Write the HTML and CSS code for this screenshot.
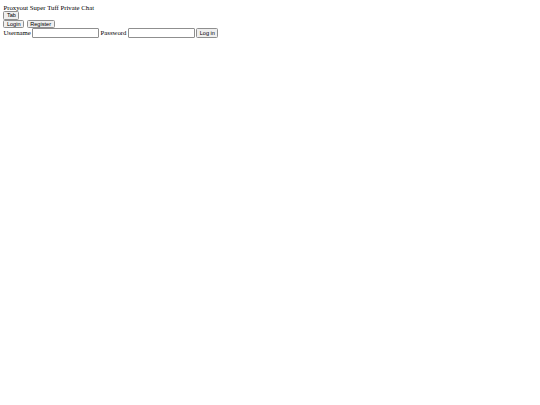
FILE: index.html
```html
<!DOCTYPE html>
<html>
<head>
<meta charset="utf-8">
<title>Proxyout Super Tuff Private Chat</title>
<link rel="stylesheet" href="styles.css">
</head>
<body>
<div class="title">Proxyout Super Tuff Private Chat</div>
<div class="row"><button class="btn">Tab</button></div>
<div class="row"><button class="btn">Login</button> <button class="btn">Register</button></div>
<form class="row login">
  <label>Username</label> <input class="field" type="text">
  <label>Password</label> <input class="field" type="password">
  <button class="btn" type="button">Log in</button>
</form>
</body>
</html>
```

FILE: styles.css
```css
html, body {
  background: #ffffff;
}
body {
  margin: 3.5px 3.4px;
  font-family: "Liberation Serif", "Times New Roman", serif;
  font-size: 6.75px;
  line-height: 8.3px;
  color: #000000;
  -webkit-font-smoothing: antialiased;
}
.title {
  height: 7.8px;
  white-space: nowrap;
}
.row {
  margin: 0;
  display: block;
  white-space: nowrap;
  font-size: 0;
}
.row .btn + .btn {
  margin-left: 2.6px;
}
.login {
  display: flex;
  align-items: center;
  gap: 1.4px;
  font-size: 6.75px;
}
.btn {
  font-family: "Liberation Sans", Arial, sans-serif;
  font-size: 5.6px;
  line-height: 6.6px;
  height: 8.6px;
  padding: 0 2.5px;
  margin: 0;
  border: 1px solid #8f8f8f;
  border-radius: 1.5px;
  background: #efefef;
  color: #000000;
  vertical-align: top;
}
.field {
  width: 67px;
  height: 9.4px;
  box-sizing: border-box;
  margin: 0;
  padding: 0;
  border: 1px solid #8f8f8f;
  border-radius: 1px;
  background: #ffffff;
}
.login .btn {
  height: 9.4px;
}
```
